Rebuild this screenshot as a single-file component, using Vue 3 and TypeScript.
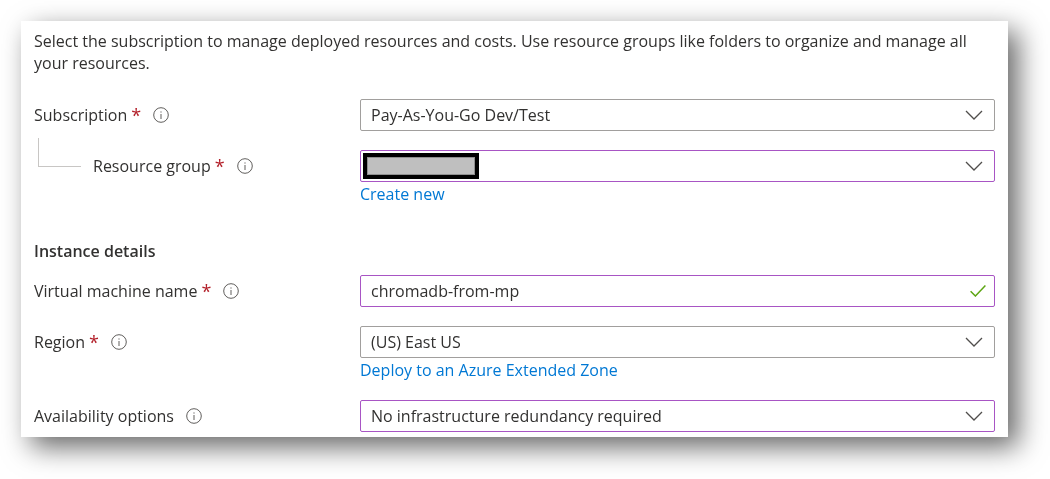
<script setup lang="ts">
interface Row {
  label: string
  required: boolean
  value: string
  purple: boolean
  link?: string
  valid?: boolean
  redacted?: boolean
  child?: boolean
  gap: string
}

const topRows: Row[] = [
  { label: 'Subscription', required: true, value: 'Pay-As-You-Go Dev/Test', purple: false, gap: 'gap-s' },
  { label: 'Resource group', required: true, value: '', purple: true, link: 'Create new', redacted: true, child: true, gap: 'gap-none' }
]
const detailRows: Row[] = [
  { label: 'Virtual machine name', required: true, value: 'chromadb-from-mp', purple: true, valid: true, gap: 'gap-m' },
  { label: 'Region', required: true, value: '(US) East US', purple: false, link: 'Deploy to an Azure Extended Zone', gap: 'gap-m' },
  { label: 'Availability options', required: false, value: 'No infrastructure redundancy required', purple: true, gap: 'gap-none' }
]
const groups = [
  { title: '', rows: topRows },
  { title: 'Instance details', rows: detailRows }
]
</script>

<template>
  <div class="page">
    <section class="card">
      <p class="intro">
        Select the subscription to manage deployed resources and costs. Use resource groups like folders to organize and manage all your resources.
      </p>
      <div v-for="group in groups" :key="group.title" class="group">
        <h3 v-if="group.title" class="heading">{{ group.title }}</h3>
        <div v-for="row in group.rows" :key="row.label" class="row" :class="row.gap">
          <div class="label-cell">
            <span v-if="row.child" class="elbow"></span>
            <span class="label">{{ row.label }}</span>
            <span v-if="row.required" class="star">*</span>
            <svg class="info" viewBox="0 0 16 16" width="16" height="16" fill="none">
              <circle cx="8" cy="8" r="7.3" stroke="#605e5c" stroke-width="1" />
              <rect x="7.5" y="7" width="1" height="5" fill="#605e5c" />
              <rect x="7.5" y="4.4" width="1" height="1.2" fill="#605e5c" />
            </svg>
          </div>
          <div class="control">
            <div class="select" :class="{ purple: row.purple }">
              <span v-if="row.redacted" class="redact"></span>
              <span v-else class="value">{{ row.value }}</span>
              <svg v-if="row.valid" class="check" viewBox="0 0 16 12" width="16" height="12" fill="none">
                <path d="M0.6 6.2 L5.4 11 L15.4 0.6" stroke="#5da513" stroke-width="1.5" />
              </svg>
              <svg v-else class="chevron" viewBox="0 0 18 10" width="18" height="10" fill="none">
                <path d="M1 1 L9 9 L17 1" stroke="#504e4c" stroke-width="1.3" />
              </svg>
            </div>
            <a v-if="row.link" class="link" href="#" @click.prevent>{{ row.link }}</a>
          </div>
        </div>
      </div>
    </section>
  </div>
</template>

<style>
html,
body {
  margin: 0;
  background: #ffffff;
}
</style>

<style scoped>
.page {
  width: 1050px;
  height: 479px;
  padding: 21px 42px 42px 21px;
  box-sizing: border-box;
  overflow: hidden;
  font-family: "Open Sans", "Noto Sans", sans-serif;
  font-size: 16px;
  color: #323130;
}
.card {
  height: 416px;
  background: #ffffff;
  box-shadow: 10px 10px 26px rgba(0, 0, 0, 0.6);
  padding: 9px 13px 0 13px;
  box-sizing: border-box;
  overflow: hidden;
  filter: blur(0.3px);
}
.intro {
  margin: 0 0 25px 0;
  line-height: 22px;
}
.row {
  display: flex;
  align-items: flex-start;
}
.gap-s {
  margin-bottom: 19px;
}
.gap-m {
  margin-bottom: 19px;
}
.gap-none {
  margin-bottom: 0;
}
.group + .group {
  margin-top: 35px;
}
.heading {
  margin: 0 0 13px 0;
  font-size: 16px;
  font-weight: 600;
  line-height: 22px;
}
.label-cell {
  width: 326px;
  height: 32px;
  flex: none;
  display: flex;
  align-items: center;
  box-sizing: border-box;
}
.label {
  line-height: 22px;
}
.star {
  color: #b3202a;
  margin: 0 0 0 4px;
  font-size: 18px;
  line-height: 22px;
}
.info {
  margin-left: 12px;
}
.elbow {
  width: 43px;
  height: 29px;
  margin: -28px 12px 0 4px;
  box-sizing: border-box;
  border-left: 1px solid #c8c6c4;
  border-bottom: 1px solid #c8c6c4;
  flex: none;
}
.control {
  flex: 1;
}
.select {
  height: 32px;
  box-sizing: border-box;
  border: 1px solid #a19f9d;
  border-radius: 2px;
  display: flex;
  align-items: center;
  justify-content: space-between;
  padding: 0 10px 0 10px;
}
.select.purple {
  border-color: #a855c4;
}
.value {
  line-height: 22px;
}
.redact {
  width: 116px;
  height: 26px;
  box-sizing: border-box;
  margin-left: -8px;
  background: #bfbfbf;
  border: 4px solid #000000;
  box-shadow: inset 0 0 0 1px #8f8f8f;
}
.chevron {
  margin-right: 1px;
}
.check {
  margin-right: -2px;
}
.link {
  display: block;
  color: #0078d4;
  text-decoration: none;
  line-height: 22px;
  margin-top: 1px;
}
</style>
